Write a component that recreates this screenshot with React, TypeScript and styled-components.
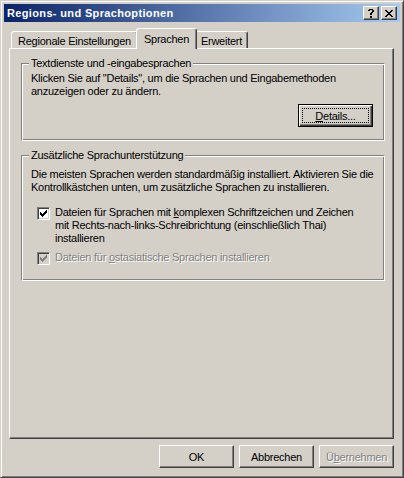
import React from "react";
import styled, { createGlobalStyle } from "styled-components";

const Global = createGlobalStyle`
  html, body { margin: 0; padding: 0; background: #d4d0c8; }
  #root { width: 404px; height: 478px; }
`;

const Window = styled.div`
  box-sizing: border-box;
  width: 404px;
  height: 478px;
  background: #d4d0c8;
  border: 1px solid;
  border-color: #d4d0c8 #404040 #404040 #d4d0c8;
  box-shadow: inset 1px 1px #fff, inset -1px -1px #808080;
  padding: 3px;
  display: flex;
  flex-direction: column;
  font-family: "Liberation Sans", Arial, sans-serif;
  font-size: 11px;
  letter-spacing: -0.25px;
  color: #000;
`;

const TitleBar = styled.div`
  height: 18px;
  flex: none;
  display: flex;
  align-items: center;
  gap: 2px;
  padding: 0 3px 0 3px;
  background: linear-gradient(to right, #0a246a, #a6caf0);
`;

const Title = styled.span`
  flex: 1;
  color: #fff;
  font-weight: bold;
  font-size: 11px;
  letter-spacing: 0.35px;
  white-space: nowrap;
`;

const CapButton = styled.div`
  box-sizing: border-box;
  width: 16px;
  height: 14px;
  background: #d4d0c8;
  border: 1px solid;
  border-color: #fff #404040 #404040 #fff;
  box-shadow: inset -1px -1px #808080;
  display: flex;
  align-items: center;
  justify-content: center;
`;

const Body = styled.div`
  flex: 1;
  display: flex;
  flex-direction: column;
  padding: 6px 6px 6px 5px;
`;

const TabStrip = styled.div`
  height: 20px;
  flex: none;
  display: flex;
  align-items: flex-end;
  padding-left: 2px;
  position: relative;
  z-index: 1;
`;

const Tab = styled.div<{ $active?: boolean; $w: number }>`
  box-sizing: border-box;
  width: ${(p) => p.$w}px;
  height: ${(p) => (p.$active ? 21 : 17)}px;
  margin: ${(p) => (p.$active ? "0 -2px -1px" : "0")};
  border: 1px solid;
  border-bottom: none;
  border-color: #fff #404040 transparent #fff;
  box-shadow: inset -1px 0 #808080;
  border-radius: 3px 3px 0 0;
  background: #d4d0c8;
  position: relative;
  z-index: ${(p) => (p.$active ? 2 : 1)};
  display: flex;
  align-items: center;
  justify-content: center;
  padding-top: ${(p) => (p.$active ? 0 : 2)}px;
  white-space: nowrap;
`;

const Panel = styled.div`
  flex: 1;
  box-sizing: border-box;
  border: 1px solid;
  border-color: #fff #404040 #404040 #fff;
  box-shadow: inset -1px -1px #808080;
  padding: 14px 8px 0 11px;
  display: flex;
  flex-direction: column;
  gap: 14px;
`;

const Group = styled.div<{ $h: number; $pt: number }>`
  position: relative;
  box-sizing: border-box;
  height: ${(p) => p.$h}px;
  border: 1px solid;
  border-color: #808080 #fff #fff #808080;
  box-shadow: inset 1px 1px #fff, inset -1px -1px #808080;
  padding: ${(p) => p.$pt}px 0 0 9px;
  display: flex;
  flex-direction: column;
`;

const Legend = styled.span`
  position: absolute;
  top: -7px;
  left: 7px;
  padding: 0 2px;
  background: #d4d0c8;
  line-height: 13px;
  white-space: nowrap;
`;

const Text = styled.div`
  line-height: 13px;
  white-space: nowrap;
`;

const ButtonLine = styled.div<{ $mr: number; $mt: number }>`
  display: flex;
  justify-content: flex-end;
  margin: ${(p) => p.$mt}px ${(p) => p.$mr}px 0 0;
`;

const Button = styled.button<{ $default?: boolean }>`
  box-sizing: border-box;
  width: 75px;
  height: 23px;
  margin: 0;
  padding: ${(p) => (p.$default ? "3px" : "0")};
  background: #d4d0c8;
  font: inherit;
  letter-spacing: inherit;
  color: ${(p) => (p.disabled ? "#808080" : "#000")};
  text-shadow: ${(p) => (p.disabled ? "1px 1px #fff" : "none")};
  border: 1px solid;
  border-color: ${(p) =>
    p.$default ? "#000" : "#fff #404040 #404040 #fff"};
  box-shadow: ${(p) =>
    p.$default
      ? "inset 1px 1px #fff, inset -1px -1px #404040, inset -2px -2px #808080"
      : "inset -1px -1px #808080"};
  display: flex;
  align-items: center;
  justify-content: center;
  cursor: default;
`;

const FocusRect = styled.span`
  flex: 1;
  align-self: stretch;
  border: 1px dotted #000;
  display: flex;
  align-items: center;
  justify-content: center;
`;

const Mn = styled.span`
  text-decoration: underline;
  text-underline-offset: 1px;
`;

const CheckRow = styled.div<{ $mt: number; $disabled?: boolean }>`
  display: flex;
  align-items: flex-start;
  gap: 5px;
  margin: ${(p) => p.$mt}px 0 0 6px;
  color: ${(p) => (p.$disabled ? "#808080" : "#000")};
  text-shadow: ${(p) => (p.$disabled ? "1px 1px #fff" : "none")};
`;

const Box = styled.div<{ $disabled?: boolean }>`
  box-sizing: border-box;
  flex: none;
  width: 13px;
  height: 13px;
  margin-top: 1px;
  border: 1px solid;
  border-color: #808080 #fff #fff #808080;
  box-shadow: inset 1px 1px #404040, inset -1px -1px #d4d0c8;
  background: ${(p) => (p.$disabled ? "#d4d0c8" : "#fff")};
  display: flex;
  align-items: center;
  justify-content: center;
`;

const ButtonRow = styled.div`
  flex: none;
  display: flex;
  justify-content: flex-end;
  gap: 5px;
  margin-top: 6px;
`;

function Pixels({ rows, color }: { rows: string[]; color: string }) {
  const w = rows[0].length;
  const h = rows.length;
  const rects: React.ReactElement[] = [];
  rows.forEach((r, y) =>
    r.split("").forEach((c, x) => {
      if (c === "X")
        rects.push(<rect key={`${x}-${y}`} x={x} y={y} width={1} height={1} />);
    })
  );
  return (
    <svg width={w} height={h} viewBox={`0 0 ${w} ${h}`} fill={color} shapeRendering="crispEdges">
      {rects}
    </svg>
  );
}

const QMARK = [
  ".XXXX.",
  "XX..XX",
  "....XX",
  "...XX.",
  "..XX..",
  "..XX..",
  "......",
  "..XX..",
  "..XX..",
];

const XMARK = [
  "XX....XX",
  ".XX..XX.",
  "..XXXX..",
  "...XX...",
  "..XXXX..",
  ".XX..XX.",
  "XX....XX",
];

const CHECK = [
  "......X",
  ".....XX",
  "X...XXX",
  "XX.XXX.",
  "XXXXX..",
  ".XXX...",
  "..X....",
];

function CheckBox({ disabled }: { disabled?: boolean }) {
  return (
    <Box $disabled={disabled}>
      <Pixels rows={CHECK} color={disabled ? "#808080" : "#000"} />
    </Box>
  );
}

export default function App() {
  return (
    <>
      <Global />
      <Window>
        <TitleBar>
          <Title>Regions- und Sprachoptionen</Title>
          <CapButton>
            <Pixels rows={QMARK} color="#000" />
          </CapButton>
          <CapButton>
            <Pixels rows={XMARK} color="#000" />
          </CapButton>
        </TitleBar>
        <Body>
          <TabStrip>
            <Tab $w={127}>Regionale Einstellungen</Tab>
            <Tab $w={61} $active>
              Sprachen
            </Tab>
            <Tab $w={53}>Erweitert</Tab>
          </TabStrip>
          <Panel>
            <Group $h={78} $pt={8}>
              <Legend>Textdienste und -eingabesprachen</Legend>
              <Text>
                Klicken Sie auf "Details", um die Sprachen und Eingabemethoden
                <br />
                anzuzeigen oder zu ändern.
              </Text>
              <ButtonLine $mr={11} $mt={6}>
                <Button $default>
                  <FocusRect>
                    <Mn>D</Mn>etails...
                  </FocusRect>
                </Button>
              </ButtonLine>
            </Group>
            <Group $h={126} $pt={12}>
              <Legend>Zusätzliche Sprachunterstützung</Legend>
              <Text>
                Die meisten Sprachen werden standardmäßig installiert. Aktivieren Sie die
                <br />
                Kontrollkästchen unten, um zusätzliche Sprachen zu installieren.
              </Text>
              <CheckRow $mt={12}>
                <CheckBox />
                <Text>
                  Dateien für Sprachen mit <Mn>k</Mn>omplexen Schriftzeichen und Zeichen
                  <br />
                  mit Rechts-nach-links-Schreibrichtung (einschließlich Thai)
                  <br />
                  installieren
                </Text>
              </CheckRow>
              <CheckRow $mt={6} $disabled>
                <CheckBox disabled />
                <Text>
                  Dateien für <Mn>o</Mn>stasiatische Sprachen installieren
                </Text>
              </CheckRow>
            </Group>
          </Panel>
          <ButtonRow>
            <Button>OK</Button>
            <Button>Abbrechen</Button>
            <Button disabled>
              <span>
                Ü<Mn>b</Mn>ernehmen
              </span>
            </Button>
          </ButtonRow>
        </Body>
      </Window>
    </>
  );
}
